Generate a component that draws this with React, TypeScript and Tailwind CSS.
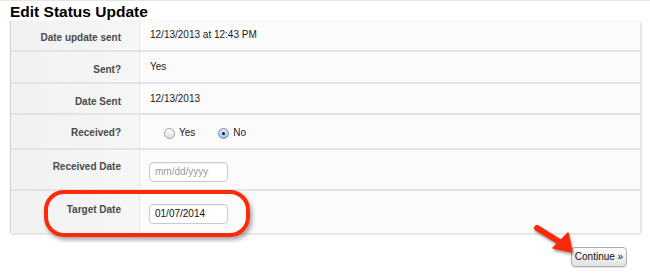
import type { ReactNode } from 'react'

function Row({
  label,
  children,
  rowClass,
  labelClass,
  valueClass,
}: {
  label: string
  children: ReactNode
  rowClass: string
  labelClass: string
  valueClass: string
}) {
  return (
    <div className={`flex border-b-2 border-[#e4e4e4] ${rowClass}`}>
      <div
        className={`w-[129px] shrink-0 border-r border-[#e9e9e9] bg-gradient-to-r from-[#f1f1f1] to-[#f6f6f6] pr-[18px] text-right text-[10px] font-bold leading-[14px] text-[#4a4a4a] ${labelClass}`}
      >
        {label}
      </div>
      <div className={`flex-1 bg-[#fbfbfb] pl-[10px] text-[10px] leading-[14px] text-[#1a1a1a] ${valueClass}`}>
        {children}
      </div>
    </div>
  )
}

function Radio({ checked, label }: { checked?: boolean; label: string }) {
  return (
    <span className="flex items-center gap-[4px]">
      {checked ? (
        <span className="flex h-[11px] w-[11px] items-center justify-center rounded-full border border-[#6d8fb8] bg-gradient-to-b from-[#dbe9f8] to-[#9fc1e6]">
          <span className="h-[3px] w-[3px] rounded-full bg-[#1c1c1c]" />
        </span>
      ) : (
        <span className="h-[11px] w-[11px] rounded-full border border-[#a0a0a0] bg-gradient-to-b from-[#ffffff] to-[#dedede]" />
      )}
      <span>{label}</span>
    </span>
  )
}

function DateInput({ value, placeholder }: { value?: string; placeholder?: string }) {
  return (
    <div className="flex h-[20px] w-[79px] items-center rounded-[4px] border border-[#cbcbcb] bg-white pl-[5px] text-[10px] shadow-[inset_0_1px_1px_rgba(0,0,0,0.06)]">
      {value ? <span className="text-[#111]">{value}</span> : <span className="text-[#9a9a9a]">{placeholder}</span>}
    </div>
  )
}

export default function App() {
  return (
    <div className="relative h-[277px] w-[650px] overflow-hidden border-t border-[#e6e6e6] bg-white font-['Liberation_Sans',Arial,sans-serif]">
      <h1 className="ml-[10px] mt-[1px] text-[15.5px] font-bold leading-[19px] text-black">Edit Status Update</h1>

      {/* Form table */}
      <div className="ml-[10px] w-[630px] border-l border-[#d2d2d2] shadow-[1px_1px_3px_rgba(0,0,0,0.18)]">
        <Row label="Date update sent" rowClass="h-[31px]" labelClass="pt-[10px]" valueClass="pt-[7px]">
          12/13/2013 at 12:43 PM
        </Row>
        <Row label="Sent?" rowClass="h-[32px]" labelClass="pt-[11px]" valueClass="pt-[8px]">
          Yes
        </Row>
        <Row label="Date Sent" rowClass="h-[31px]" labelClass="pt-[11px]" valueClass="pt-[8px]">
          12/13/2013
        </Row>
        <Row label="Received?" rowClass="h-[35px]" labelClass="pt-[11px]" valueClass="pt-[11px]">
          <div className="flex gap-[23px] pl-[14px]">
            <Radio label="Yes" />
            <Radio checked label="No" />
          </div>
        </Row>
        <Row label="Received Date" rowClass="h-[41px]" labelClass="pt-[10px]" valueClass="pt-[12px] !pl-[9px]">
          <DateInput placeholder="mm/dd/yyyy" />
        </Row>
        <Row label="Target Date" rowClass="h-[42px] !border-b-0" labelClass="pt-[12px]" valueClass="pt-[13px] !pl-[9px]">
          <DateInput value="01/07/2014" />
        </Row>
      </div>

      <div className="mr-[23px] mt-[14px] flex justify-end">
        <button className="h-[20px] w-[56px] rounded-[4px] border border-[#adadad] bg-gradient-to-b from-[#ffffff] to-[#e2e2e2] text-[10px] leading-[18px] text-[#111] shadow-[0_1px_1px_rgba(0,0,0,0.12)]">
          Continue »
        </button>
      </div>

      {/* Annotation: red outline round Target Date */}
      <div className="absolute left-[44px] top-[189px] h-[47px] w-[206px] rounded-[20px] border-[4px] border-[#fb2a0b] shadow-[2px_3px_4px_rgba(0,0,0,0.35)]" />

      {/* Annotation: red arrow to Continue */}
      <svg className="absolute left-[525px] top-[215px] h-[45px] w-[60px] drop-shadow-[1px_2px_1.5px_rgba(0,0,0,0.4)]" viewBox="0 0 60 45">
        <line x1="12" y1="12" x2="38" y2="28" stroke="#fb2a0b" strokeWidth="6" strokeLinecap="round" />
        <polygon points="28,32 43,17 47,36" fill="#fb2a0b" stroke="#fb2a0b" strokeWidth="1.5" strokeLinejoin="round" />
      </svg>
    </div>
  )
}
